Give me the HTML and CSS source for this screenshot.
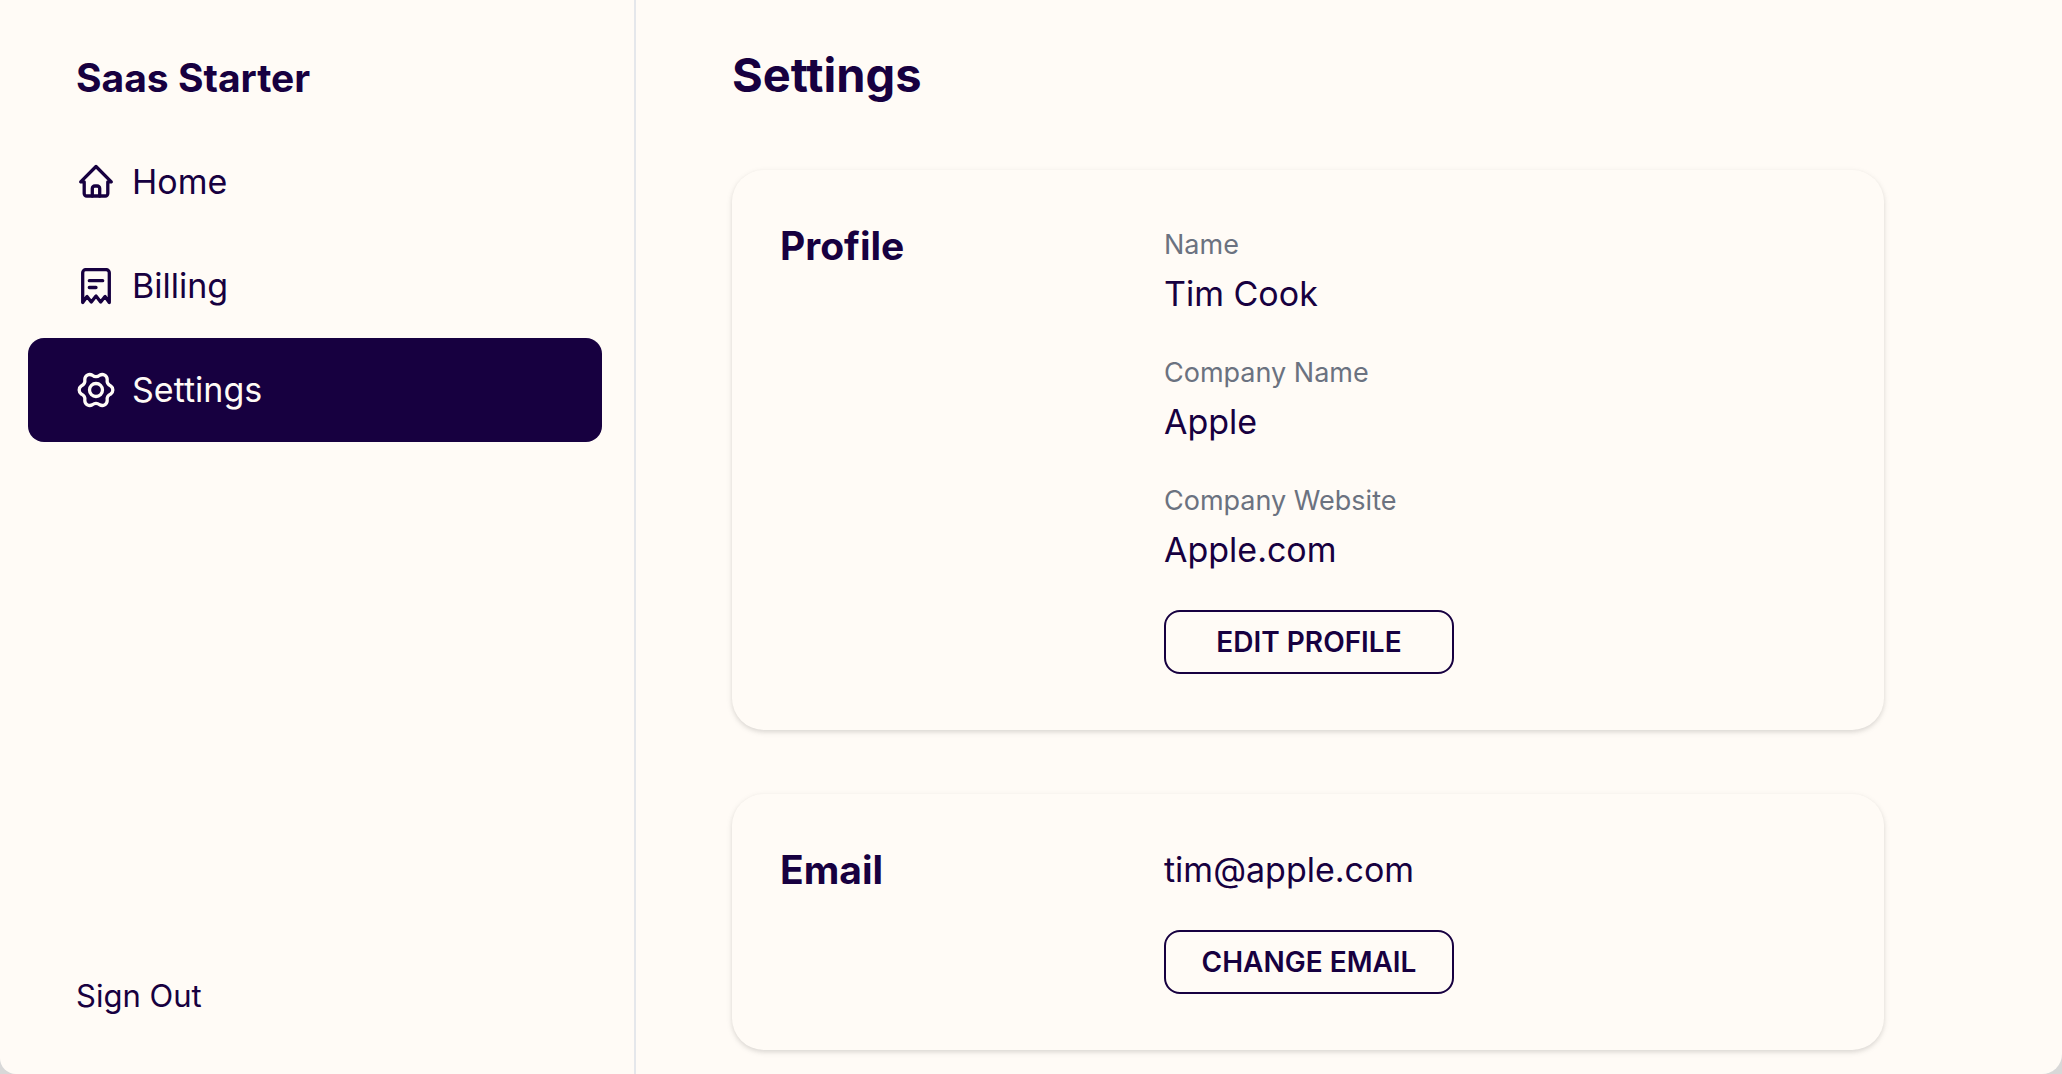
FILE: index.html
```html
<!DOCTYPE html>
<html lang="en">

<head>
    <meta charset="UTF-8">
    <meta name="viewport" content="width=device-width, initial-scale=1">
    <title>Settings - Saas Starter</title>
    <link rel="stylesheet" href="styles.css">
</head>

<body>
    <div class="app">
        <aside class="sidebar">
            <a href="#" class="brand">Saas Starter</a>
            <nav class="menu">
                <a href="#" class="menu-item">
                    <svg class="icon" viewBox="0 0 40 40" aria-hidden="true">
                        <path d="M4.700 19.800 20 4.500 35.300 19.800M8.200 19.800V31.500a2.500 2.500 0 0 0 2.500 2.500h18.600a2.500 2.500 0 0 0 2.500-2.500V19.800M4.700 19.800h3.500M31.800 19.800h3.500"/>
                        <path d="M16.300 34v-7.500a2.500 2.500 0 0 1 2.500-2.500h2.400a2.500 2.500 0 0 1 2.500 2.500v7.500"/>
                    </svg>
                    Home
                </a>
                <a href="#" class="menu-item">
                    <svg class="icon" viewBox="0 0 40 40" aria-hidden="true">
                        <path d="M6.700 36.500V6.700a3 3 0 0 1 3-3h20.600a3 3 0 0 1 3 3v29.800L29 30.500 24.700 36 20 30 15.300 36 11 30.500z"/>
                        <path d="M13.300 14.700h13.400M13.300 21.500h6.700"/>
                    </svg>
                    Billing
                </a>
                <a href="#" class="menu-item active">
                    <svg class="icon" viewBox="0 0 40 40" aria-hidden="true">
                        <circle cx="20" cy="20" r="6.500"/>
                        <path d="M34.700 15.900A5 5 0 0 1 34.700 24.100A6 6 0 0 0 31.200 30.500A5 5 0 0 1 23.700 34.800A6 6 0 0 0 16.300 34.800A5 5 0 0 1 8.800 30.500A6 6 0 0 0 5.300 24.100A5 5 0 0 1 5.300 15.900A6 6 0 0 0 8.800 9.500A5 5 0 0 1 16.300 5.200A6 6 0 0 0 23.700 5.200A5 5 0 0 1 31.200 9.500A6 6 0 0 0 34.700 15.900z"/>
                    </svg>
                    Settings
                </a>
            </nav>
            <a href="#" class="sign-out">Sign Out</a>
        </aside>

        <main class="content">
            <h1>Settings</h1>

            <section class="card">
                <h2>Profile</h2>
                <div class="card-body">
                    <dl class="fields">
                        <div class="field">
                            <dt>Name</dt>
                            <dd>Tim Cook</dd>
                        </div>
                        <div class="field">
                            <dt>Company Name</dt>
                            <dd>Apple</dd>
                        </div>
                        <div class="field">
                            <dt>Company Website</dt>
                            <dd>Apple.com</dd>
                        </div>
                    </dl>
                    <button type="button" class="btn">Edit Profile</button>
                </div>
            </section>

            <section class="card">
                <h2>Email</h2>
                <div class="card-body">
                    <p>tim@apple.com</p>
                    <button type="button" class="btn">Change Email</button>
                </div>
            </section>
        </main>
    </div>
</body>

</html>
```

FILE: styles.css
```css
* {
    margin: 0;
    padding: 0;
    box-sizing: border-box;
}

body {
    background-color: #d8d8d8;
    color: #170040;
    font-family: Inter, "Liberation Sans", sans-serif;
    font-size: 34px;
    line-height: 40px;
}

a {
    color: inherit;
    text-decoration: none;
}

.app {
    display: flex;
    min-height: 100vh;
    background-color: #fffbf6;
    border-radius: 0 0 20px 16px;
}

/* sidebar */
.sidebar {
    display: flex;
    flex-direction: column;
    flex: 0 0 636px;
    padding: 52px 32px 52px 28px;
    border-right: 2px solid #e5e7eb;
}

.brand {
    padding: 0 48px;
    font-size: 39px;
    line-height: 52px;
    font-weight: 700;
}

.menu {
    margin-top: 26px;
}

.menu-item {
    display: flex;
    align-items: center;
    gap: 16px;
    padding: 32px 48px;
    border-radius: 16px;
}

.active {
    background-color: #170040;
    color: #fffbf6;
}

.icon {
    width: 40px;
    height: 40px;
    fill: none;
    stroke: currentColor;
    stroke-width: 3.3;
    stroke-linecap: round;
    stroke-linejoin: round;
}

.sign-out {
    margin-top: auto;
    padding: 0 48px;
    font-size: 31px;
    line-height: 52px;
}

/* main column */
.content {
    flex: 1;
    padding: 46px 96px 24px;
}

h1 {
    font-size: 47px;
    line-height: 58px;
    font-weight: 700;
}

.card {
    display: grid;
    grid-template-columns: repeat(3, 1fr);
    column-gap: 96px;
    max-width: 1152px;
    margin-top: 64px;
    padding: 56px 48px;
    border-radius: 32px;
    box-shadow: 0 2px 6px rgba(0, 0, 0, 0.1), 0 2px 4px rgba(0, 0, 0, 0.06);
}

h1 + .card {
    margin-top: 66px;
}

.card h2 {
    font-size: 39px;
    line-height: 40px;
    font-weight: 700;
}

.card-body {
    grid-column: span 2;
}

.fields {
    display: grid;
    gap: 40px;
}

.field dt {
    margin-bottom: 10px;
    color: #6b7280;
    font-size: 27px;
    line-height: 38px;
}

.btn {
    display: block;
    min-width: 290px;
    height: 64px;
    margin-top: 40px;
    padding: 0 32px;
    border: 2px solid #170040;
    border-radius: 16px;
    background: none;
    color: inherit;
    font-family: inherit;
    font-size: 28px;
    font-weight: 600;
    text-transform: uppercase;
    cursor: pointer;
}
```
